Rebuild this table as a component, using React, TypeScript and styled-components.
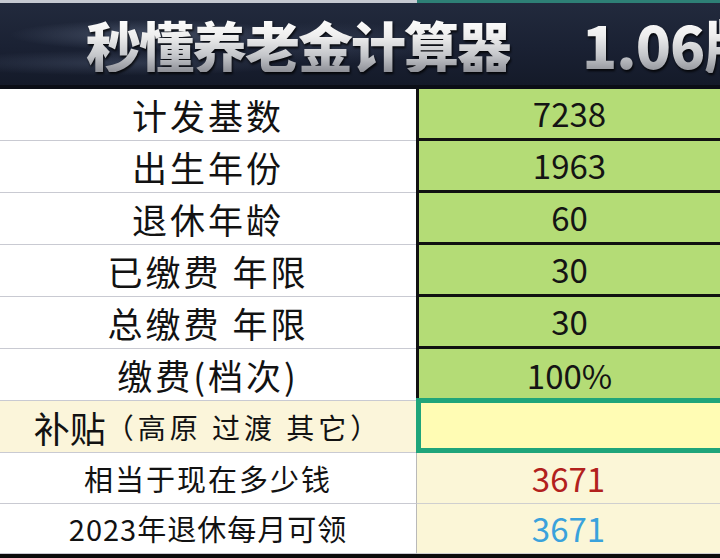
import React from "react";
import styled, { createGlobalStyle } from "styled-components";

const Global = createGlobalStyle`
  html, body { margin: 0; padding: 0; background: #ffffff; }
  body { width: 720px; height: 558px; overflow: hidden; }
  * { box-sizing: border-box; }
`;

const CJK = `"Noto Sans CJK SC", "Noto Sans", sans-serif`;

const Page = styled.div`
  width: 720px;
  height: 558px;
  display: flex;
  flex-direction: column;
  overflow: hidden;
  font-family: ${CJK};
  color: #121212;
`;

const TopStrip = styled.div`
  display: grid;
  grid-template-columns: 417px 1fr;
  height: 3px;
`;

const StripPart = styled.div<{ $tone: "light" | "teal" }>`
  background: ${(p) => (p.$tone === "light" ? "#c6cad2" : "#2e8076")};
`;

const Header = styled.div`
  height: 86px;
  display: flex;
  align-items: center;
  padding-left: 86px;
  white-space: nowrap;
  overflow: hidden;
  border-bottom: 4px solid #0b0e16;
  background:
    radial-gradient(ellipse 200px 22px at 150px 32px, rgba(120, 134, 160, 0.45), rgba(120, 134, 160, 0) 70%),
    radial-gradient(ellipse 260px 18px at 120px 60px, rgba(95, 108, 135, 0.35), rgba(95, 108, 135, 0) 70%),
    radial-gradient(ellipse 180px 30px at 330px 40px, rgba(80, 92, 118, 0.35), rgba(80, 92, 118, 0) 70%),
    linear-gradient(180deg, #222a3d 0%, #1a2133 55%, #141a29 100%);
`;

const TitleText = styled.span<{ $size: number; $gap: number }>`
  font-family: ${CJK};
  font-weight: 900;
  font-size: ${(p) => p.$size}px;
  letter-spacing: ${(p) => p.$gap}px;
  line-height: 1;
  background: linear-gradient(180deg, #ffffff 0%, #eeeeee 35%, #c4c6ca 70%, #8e9097 100%);
  -webkit-background-clip: text;
  background-clip: text;
  color: transparent;
  filter: drop-shadow(1px 2px 1px rgba(0, 0, 0, 0.8));
`;

const Version = styled(TitleText)`
  margin-left: 72px;
`;

const Row = styled.div<{ $h: number }>`
  display: grid;
  grid-template-columns: 416px 1fr;
  height: ${(p) => p.$h}px;
`;

const Label = styled.div<{ $tone: "white" | "cream"; $size: number; $gap: number }>`
  display: flex;
  align-items: center;
  justify-content: center;
  background: ${(p) => (p.$tone === "cream" ? "#fbf5da" : "#ffffff")};
  border-bottom: 1px solid #c9cad2;
  font-size: ${(p) => p.$size}px;
  letter-spacing: ${(p) => p.$gap}px;
  white-space: pre;
  line-height: 1;
`;

const Small = styled.span`
  font-size: 28px;
  letter-spacing: 4px;
`;

type Kind = "green" | "greenLast" | "input" | "result";

const Value = styled.div<{ $kind: Kind; $color?: string }>`
  display: flex;
  align-items: center;
  justify-content: center;
  font-size: 33px;
  line-height: 1;
  color: ${(p) => p.$color ?? "#141414"};
  background: ${(p) =>
    p.$kind === "input" ? "#fffcb4" : p.$kind === "result" ? "#fbf6d7" : "#b4dc76"};
  ${(p) =>
    p.$kind === "green"
      ? "border-left: 3px solid #111; border-bottom: 3px solid #111;"
      : p.$kind === "greenLast"
      ? "border-left: 3px solid #111;"
      : p.$kind === "input"
      ? "border: 5px solid #1fa57a; border-right: none; margin-top: -3px; height: calc(100% + 3px);"
      : "border-left: 1px solid #b9b9b9; border-bottom: 1px solid #cfcfcf;"}
`;

const Footer = styled.div`
  flex: 1;
  background: #0b0b0b;
`;

type RowData = {
  label: React.ReactNode;
  value: string;
  kind: Kind;
  h: number;
  tone?: "white" | "cream";
  size?: number;
  gap?: number;
  color?: string;
};

const rows: RowData[] = [
  { label: "计发基数", value: "7238", kind: "green", h: 52 },
  { label: "出生年份", value: "1963", kind: "green", h: 52 },
  { label: "退休年龄", value: "60", kind: "green", h: 52 },
  { label: "已缴费 年限", value: "30", kind: "green", h: 52 },
  { label: "总缴费 年限", value: "30", kind: "green", h: 52 },
  { label: "缴费(档次)", value: "100%", kind: "greenLast", h: 52 },
  {
    label: (
      <>
        补贴<Small>（高原 过渡 其它）</Small>
      </>
    ),
    value: "",
    kind: "input",
    h: 52,
    tone: "cream",
    size: 36,
    gap: 0,
  },
  { label: "相当于现在多少钱", value: "3671", kind: "result", h: 51, size: 29, gap: 2, color: "#b2211d" },
  { label: "2023年退休每月可领", value: "3671", kind: "result", h: 50, size: 29, gap: 1, color: "#3aa2dc" },
];

export default function App() {
  return (
    <>
      <Global />
      <Page>
        <TopStrip>
          <StripPart $tone="light" />
          <StripPart $tone="teal" />
        </TopStrip>
        <Header>
          <TitleText $size={55} $gap={-2}>秒懂养老金计算器</TitleText>
          <Version $size={58} $gap={-1}>1.06版</Version>
        </Header>
        {rows.map((r, i) => (
          <Row key={i} $h={r.h}>
            <Label $tone={r.tone ?? "white"} $size={r.size ?? 35} $gap={r.gap ?? 3}>
              {r.label}
            </Label>
            <Value $kind={r.kind} $color={r.color}>
              {r.value}
            </Value>
          </Row>
        ))}
        <Footer />
      </Page>
    </>
  );
}
